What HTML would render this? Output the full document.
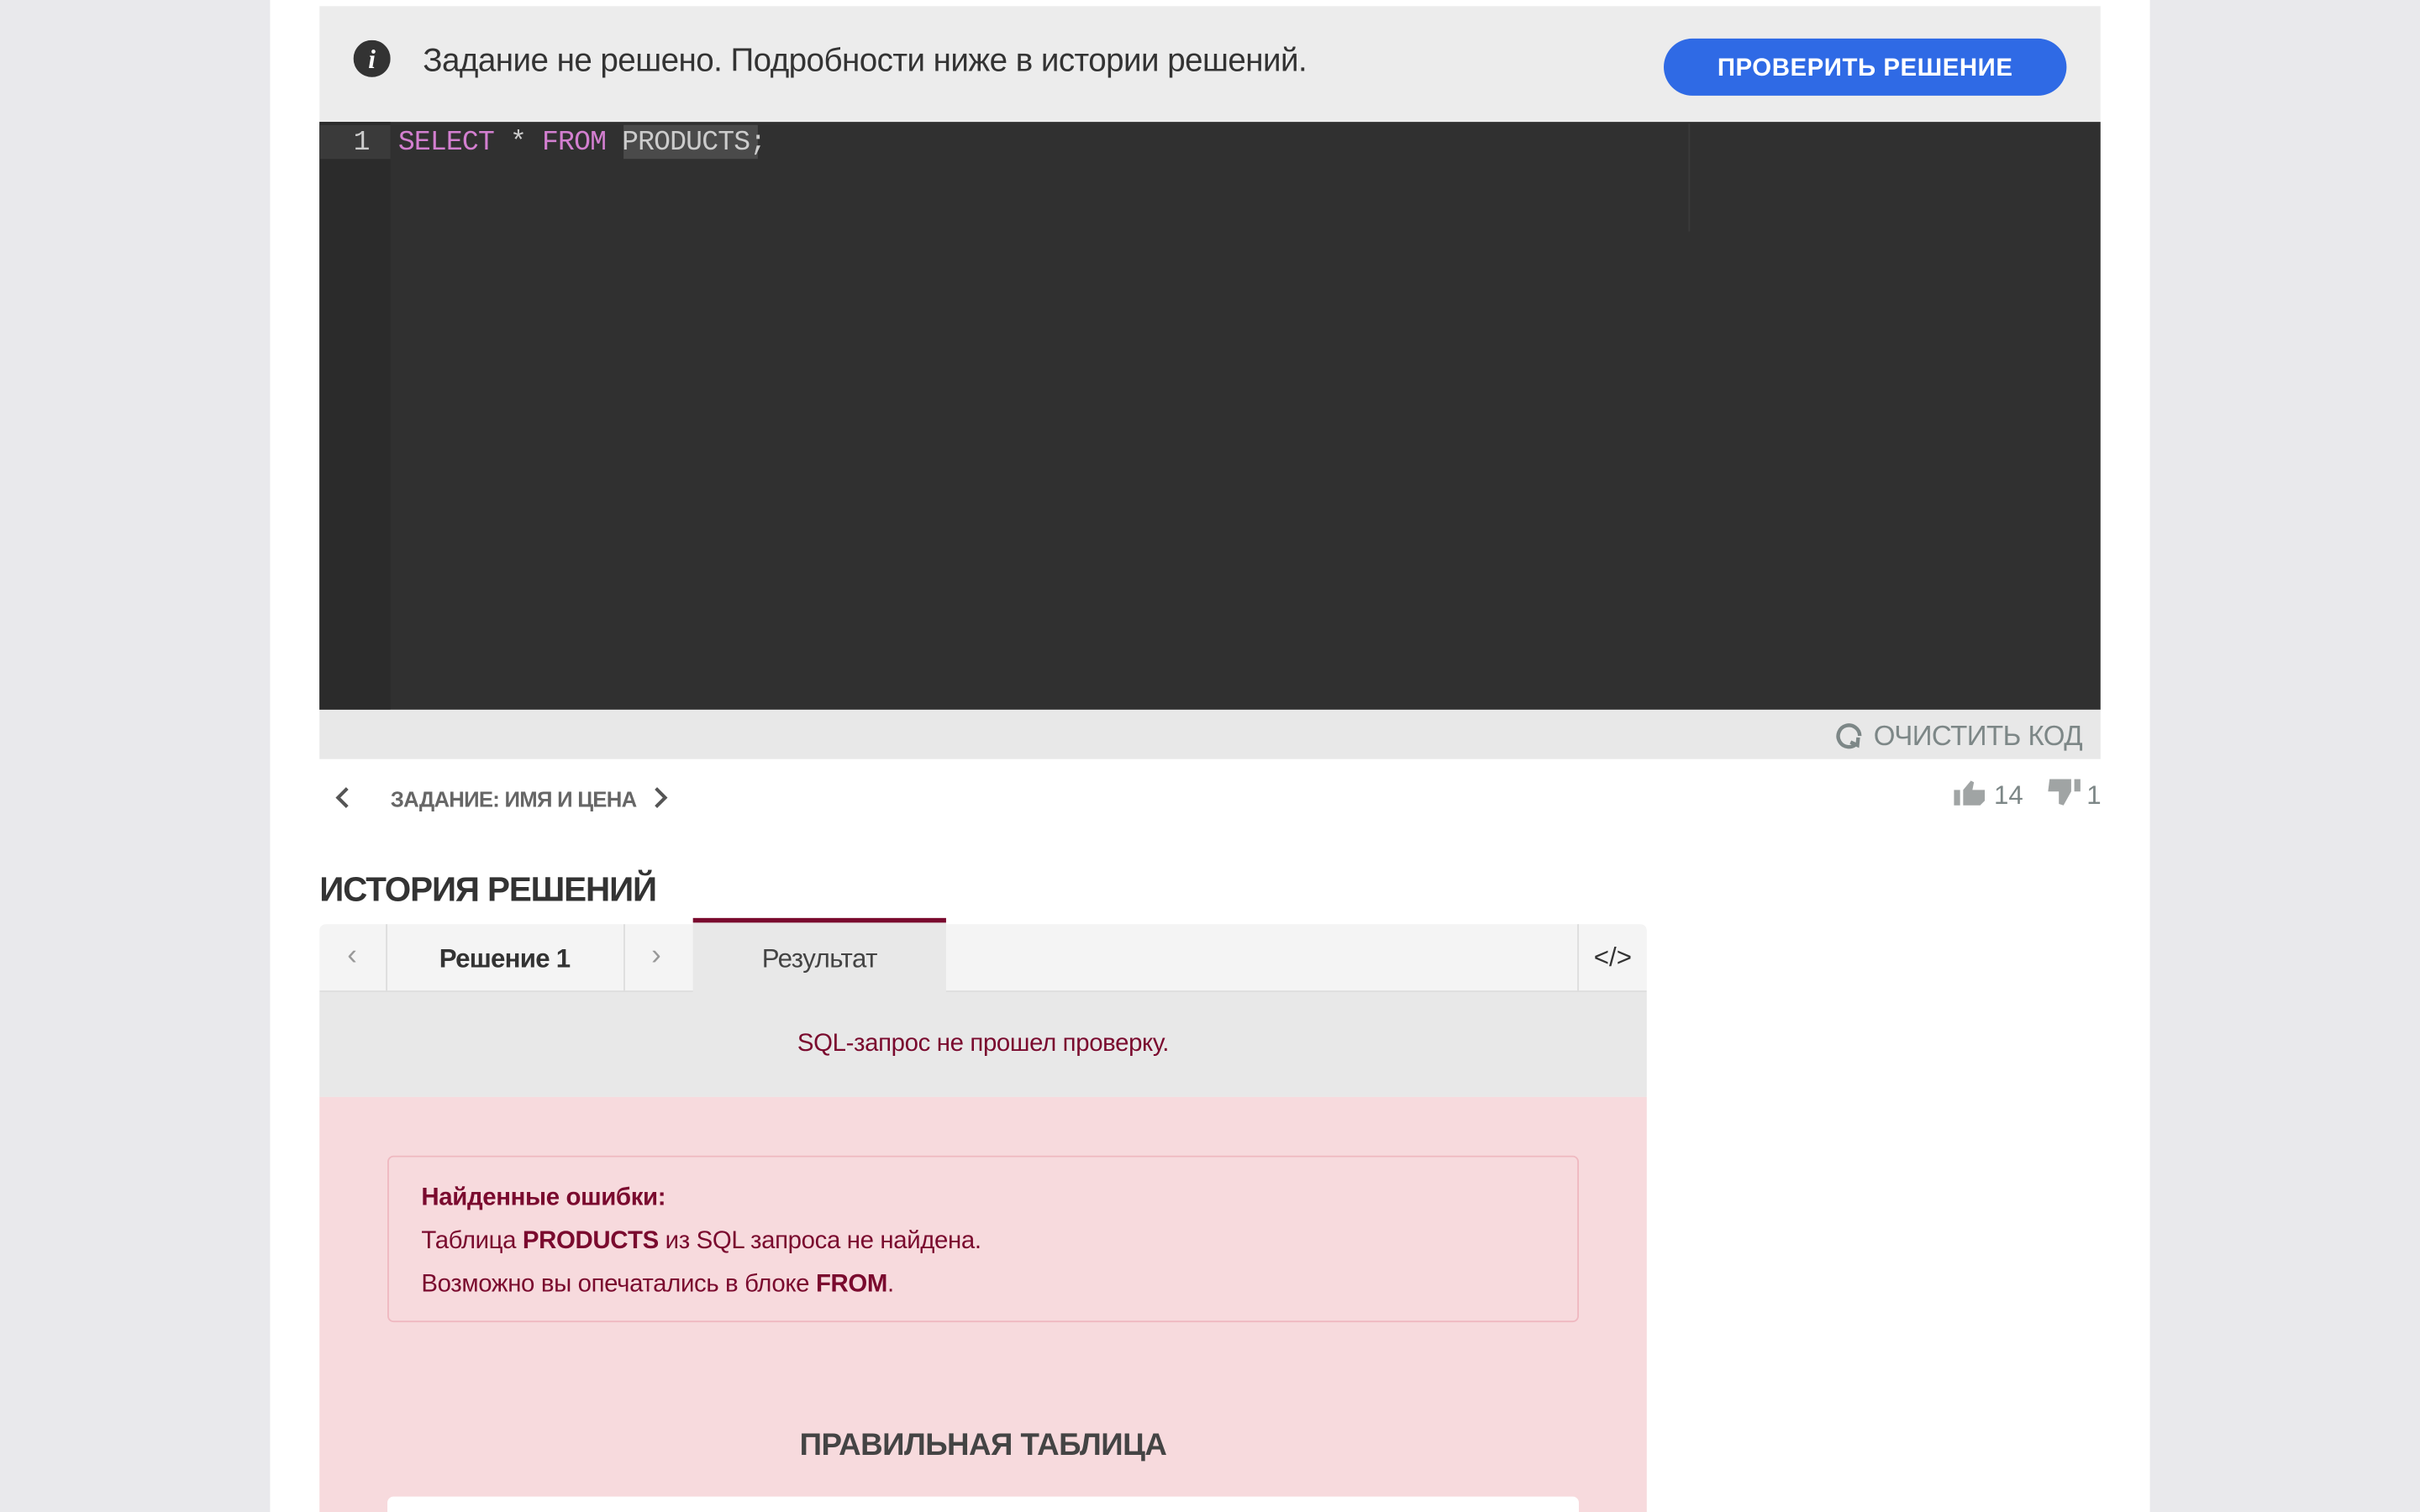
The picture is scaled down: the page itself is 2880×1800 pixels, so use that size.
<!DOCTYPE html>
<html><head><meta charset="utf-8"><style>
html,body{margin:0;padding:0;width:2880px;height:1800px;overflow:hidden;background:#e9e9ec;}
#w{position:absolute;left:0;top:0;width:1568px;height:980px;transform:scale(1.836735);transform-origin:0 0;font-family:"Liberation Sans",sans-serif;}
.a{position:absolute;}
.t{white-space:nowrap;}
</style></head><body><div id="w">
<div class="a" style="left:175px;top:0;width:1218px;height:980px;background:#fff"></div>
<div class="a" style="left:207px;top:4px;width:1154px;height:75px;background:#ececec"></div>
<svg class="a" style="left:229px;top:26px" width="24" height="24" viewBox="0 0 24 24"><circle cx="12" cy="12" r="12" fill="#333"/><text x="12" y="18" font-family="Liberation Serif" font-style="italic" font-weight="bold" font-size="17" fill="#fff" text-anchor="middle">i</text></svg>
<div class="a t" style="left:274px;top:28px;font-size:21px;color:#333;letter-spacing:-0.3px">Задание не решено. Подробности ниже в истории решений.</div>
<div class="a t" style="left:1078px;top:25px;width:261px;height:37px;border-radius:19px;background:#2f6ae5;color:#fff;font-weight:bold;font-size:16px;line-height:39px;text-align:center;letter-spacing:0.3px">ПРОВЕРИТЬ РЕШЕНИЕ</div>
<div class="a" style="left:207px;top:79px;width:1154px;height:381px;background:#303030"></div>
<div class="a" style="left:207px;top:79px;width:46px;height:381px;background:#2b2b2b"></div>
<div class="a" style="left:207px;top:81px;width:46px;height:22px;background:#3a3a3a"></div>
<div class="a" style="left:1094px;top:80px;width:1px;height:70px;background:#3a3a3a"></div>
<div class="a" style="left:404px;top:81px;width:87px;height:22px;background:#4a4a4a"></div>
<div class="a t" style="left:229px;top:83px;font-family:'Liberation Mono',monospace;font-size:18px;color:#ccc">1</div>
<div class="a t" style="left:258px;top:83px;font-family:'Liberation Mono',monospace;font-size:18px;color:#ccc;letter-spacing:-0.45px"><span style="color:#d37fd0">SELECT</span> * <span style="color:#d37fd0">FROM</span> PRODUCTS;</div>
<div class="a" style="left:207px;top:460px;width:1154px;height:32px;background:#e8e8e8"></div>
<svg class="a" style="left:1188px;top:467px" width="20" height="20" viewBox="0 0 20 20"><path d="M15 15 A7 7 0 1 1 17 10" fill="none" stroke="#7d8787" stroke-width="2.4"/><path d="M11 14 L15.5 16 L16 11" fill="none" stroke="#7d8787" stroke-width="2.4"/></svg>
<div class="a t" style="left:1214px;top:467px;font-size:18px;color:#7d8787;letter-spacing:-0.3px">ОЧИСТИТЬ КОД</div>
<svg class="a" style="left:216px;top:510px" width="12" height="14" viewBox="0 0 12 14"><path d="M9 1 L3 7 L9 13" fill="none" stroke="#555" stroke-width="2.2"/></svg>
<div class="a t" style="left:253px;top:510px;font-size:14px;font-weight:bold;color:#666;letter-spacing:-0.4px">ЗАДАНИЕ: ИМЯ И ЦЕНА</div>
<svg class="a" style="left:422px;top:510px" width="12" height="14" viewBox="0 0 12 14"><path d="M3 1 L9 7 L3 13" fill="none" stroke="#555" stroke-width="2.2"/></svg>
<svg class="a" style="left:1266px;top:505px" width="22" height="18" viewBox="0 0 22 18"><rect x="0" y="7" width="4" height="10" fill="#a0a4a4"/><path d="M6 7 L11 1 L13 2 L12 7 L20 7 L20 14 L17 17 L6 17 Z" fill="#a0a4a4"/></svg>
<div class="a t" style="left:1292px;top:506px;font-size:17px;color:#7d8787">14</div>
<svg class="a" style="left:1326px;top:505px" width="22" height="18" viewBox="0 0 22 18"><rect x="18" y="0" width="4" height="8" fill="#a0a4a4"/><path d="M16 0 L2 0 L1 8 L8 8 L8 16 L11 17 L16 8 Z" fill="#a0a4a4"/></svg>
<div class="a t" style="left:1352px;top:506px;font-size:17px;color:#7d8787">1</div>
<div class="a t" style="left:207px;top:564px;font-size:22px;font-weight:bold;color:#333;letter-spacing:-0.6px">ИСТОРИЯ РЕШЕНИЙ</div>
<div class="a" style="left:207px;top:599px;width:860px;height:44px;background:#f4f4f4;border-radius:4px 4px 0 0;border-bottom:1px solid #ddd;box-sizing:border-box"></div>
<div class="a" style="left:250px;top:599px;width:1px;height:44px;background:#ddd"></div>
<div class="a" style="left:404px;top:599px;width:1px;height:44px;background:#ddd"></div>
<div class="a" style="left:1022px;top:599px;width:1px;height:44px;background:#ddd"></div>
<div class="a t" style="left:225px;top:609px;font-size:19px;color:#999">‹</div>
<div class="a t" style="left:422px;top:609px;font-size:19px;color:#999">›</div>
<div class="a t" style="left:250px;top:612px;width:154px;text-align:center;font-size:17px;font-weight:bold;color:#333;letter-spacing:-0.4px">Решение 1</div>
<div class="a" style="left:449px;top:595px;width:164px;height:48px;background:#e8e8e8;border-top:3px solid #7a0a2e;box-sizing:border-box"></div>
<div class="a t" style="left:449px;top:612px;width:164px;text-align:center;font-size:17px;color:#444;letter-spacing:-0.3px">Результат</div>
<div class="a t" style="left:1023px;top:611px;width:44px;text-align:center;font-size:17px;color:#333">&lt;/&gt;</div>
<div class="a" style="left:207px;top:643px;width:860px;height:68px;background:#e8e8e8"></div>
<div class="a t" style="left:207px;top:668px;width:860px;text-align:center;font-size:16px;color:#7a0a2e;letter-spacing:-0.2px">SQL-запрос не прошел проверку.</div>
<div class="a" style="left:207px;top:711px;width:860px;height:269px;background:#f7dadd"></div>
<div class="a" style="left:251px;top:749px;width:772px;height:108px;border:1px solid #efb8c0;border-radius:4px;box-sizing:border-box"></div>
<div class="a t" style="left:273px;top:763px;font-size:16px;line-height:28px;color:#7a0a2e;letter-spacing:-0.2px"><b>Найденные ошибки:</b><br>Таблица <b>PRODUCTS</b> из SQL запроса не найдена.<br>Возможно вы опечатались в блоке <b>FROM</b>.</div>
<div class="a t" style="left:207px;top:926px;width:860px;text-align:center;font-size:20px;font-weight:bold;color:#444;letter-spacing:-0.3px">ПРАВИЛЬНАЯ ТАБЛИЦА</div>
<div class="a" style="left:251px;top:970px;width:772px;height:10px;background:#fff;border-radius:4px 4px 0 0"></div>
</div></body></html>
